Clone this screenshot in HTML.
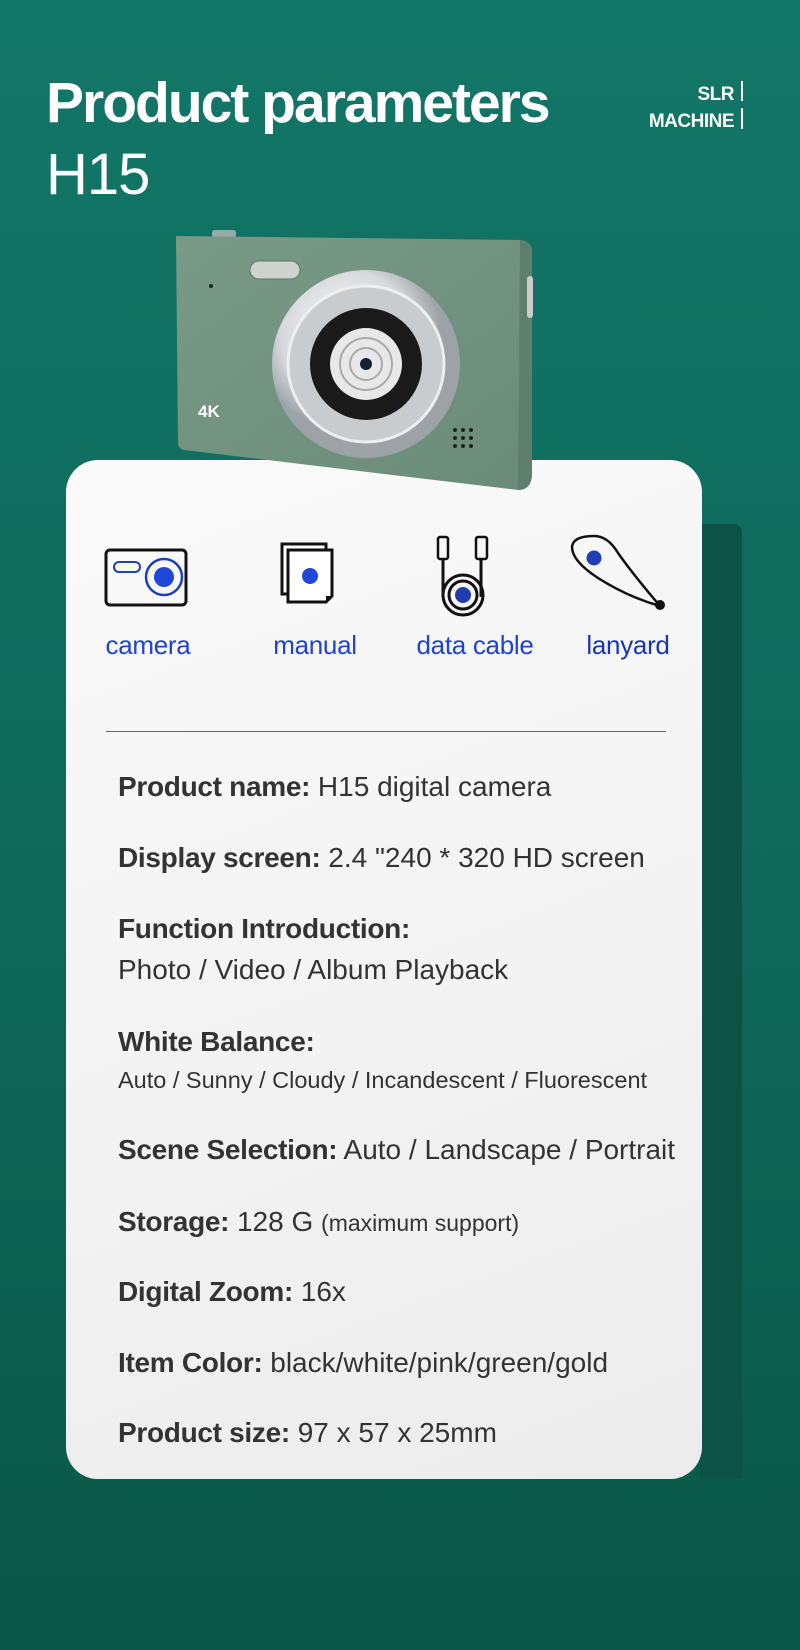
<!DOCTYPE html>
<html><head><meta charset="utf-8"><style>
*{margin:0;padding:0;box-sizing:border-box}
body{width:800px;height:1650px;overflow:hidden;position:relative;background:linear-gradient(180deg,#127667 0%,#0f6a5b 50%,#0a5747 100%);font-family:"Liberation Sans",sans-serif}
.a{position:absolute;white-space:nowrap;line-height:1}
.t{color:#fff}
.p{left:118px;font-size:28px;color:#333;letter-spacing:0}
.p b{font-weight:bold;letter-spacing:-0.3px}
.lbl{font-size:26px;color:#1f43d2;letter-spacing:-0.3px;transform:translateX(-50%)}
</style></head><body>
<div class="a t" style="left:46px;top:75px;font-size:57px;font-weight:bold;letter-spacing:-2px">Product parameters</div>
<div class="a t" style="left:46px;top:146px;font-size:58px;font-weight:normal;letter-spacing:-1px">H15</div>
<div class="a t" style="right:66px;top:81px;font-size:19px;font-weight:bold;text-align:right;line-height:27px;letter-spacing:-0.5px">SLR<br>MACHINE</div>
<div class="a" style="left:741px;top:81px;width:2px;height:20px;background:#fff"></div>
<div class="a" style="left:741px;top:108px;width:2px;height:21px;background:#fff"></div>

<div class="a" style="left:700px;top:524px;width:42px;height:955px;background:#0c5346;border-radius:0 8px 0 0"></div>
<div class="a" style="left:66px;top:460px;width:636px;height:1019px;background:linear-gradient(160deg,#fafafa,#f2f2f2 60%,#ececec);border-radius:32px"></div>

<svg class="a" style="left:170px;top:228px" width="375" height="270" viewBox="0 0 375 270">
<defs><linearGradient id="bd" x1="0" x2="1" y1="0" y2="1"><stop offset="0" stop-color="#7a9a88"/><stop offset="1" stop-color="#6a8b78"/></linearGradient>
<radialGradient id="rg" cx="0.4" cy="0.35"><stop offset="0" stop-color="#fff"/><stop offset="0.7" stop-color="#d6d9db"/><stop offset="1" stop-color="#9ca2a6"/></radialGradient></defs>
<rect x="42" y="2" width="24" height="8" rx="3" fill="#9aa"/>
<path d="M6 8 L350 12 Q362 13 362 24 L362 245 Q362 262 348 262 L14 222 Q8 221 8 214 Z" fill="url(#bd)"/>
<path d="M350 12 Q362 13 362 24 L362 245 Q362 262 348 262 Z" fill="#5f7f6e"/>
<rect x="80" y="33" width="50" height="18" rx="9" fill="#cfd3cf" stroke="#5a7a68"/>
<circle cx="41" cy="58" r="2" fill="#222"/>
<circle cx="196" cy="136" r="94" fill="url(#rg)"/>
<circle cx="196" cy="136" r="78" fill="#c9ccce" stroke="#eee" stroke-width="3"/>
<circle cx="196" cy="136" r="56" fill="#1a1a1a"/>
<circle cx="196" cy="136" r="36" fill="#e8e8e8"/>
<circle cx="196" cy="136" r="26" fill="none" stroke="#aaa" stroke-width="2"/>
<circle cx="196" cy="136" r="16" fill="none" stroke="#aaa" stroke-width="2"/>
<circle cx="196" cy="136" r="6" fill="#123"/>
<text x="28" y="189" font-size="17" font-weight="bold" fill="#fff" font-family="Liberation Sans">4K</text>
<g fill="#222"><circle cx="285" cy="202" r="2"/><circle cx="293" cy="202" r="2"/><circle cx="301" cy="202" r="2"/><circle cx="285" cy="210" r="2"/><circle cx="293" cy="210" r="2"/><circle cx="301" cy="210" r="2"/><circle cx="285" cy="218" r="2"/><circle cx="293" cy="218" r="2"/><circle cx="301" cy="218" r="2"/></g>
<rect x="357" y="48" width="6" height="42" rx="3" fill="#ccc"/>
</svg>

<svg class="a" style="left:104px;top:545px" width="86" height="66" viewBox="0 0 86 66"><rect x="2" y="5" width="80" height="55" rx="4" fill="none" stroke="#111" stroke-width="3"/><rect x="10" y="17" width="26" height="10" rx="5" fill="none" stroke="#1a3fc0" stroke-width="2"/><circle cx="60" cy="32" r="18" fill="none" stroke="#1a3fc0" stroke-width="2.5"/><circle cx="60" cy="32" r="10" fill="#1f48d8"/></svg>
<svg class="a" style="left:278px;top:540px" width="60" height="72" viewBox="0 0 60 72"><path d="M4 4 H48 V54 H4 Z" fill="#fff" stroke="#111" stroke-width="3"/><path d="M10 10 H54 V56 L48 62 H10 Z" fill="#fff" stroke="#111" stroke-width="3"/><path d="M48 62 L54 56 H48 Z" fill="#111"/><circle cx="32" cy="36" r="8" fill="#1f48d8"/></svg>
<svg class="a" style="left:434px;top:533px" width="60" height="88" viewBox="0 0 60 88"><rect x="4" y="4" width="10" height="22" rx="2" fill="none" stroke="#111" stroke-width="2.5"/><rect x="42" y="4" width="11" height="22" rx="2" fill="none" stroke="#111" stroke-width="2.5"/><path d="M9 26 V64 M47 26 V64" stroke="#111" stroke-width="3" fill="none"/><circle cx="29" cy="62" r="20" fill="none" stroke="#111" stroke-width="3"/><circle cx="29" cy="62" r="14" fill="none" stroke="#111" stroke-width="3"/><circle cx="29" cy="62" r="8" fill="#1f3fb0"/></svg>
<svg class="a" style="left:568px;top:533px" width="102" height="80" viewBox="0 0 102 80"><path d="M26 3 Q5 3 4 14 Q4 28 30 45 Q60 64 92 73 Q64 40 50 20 Q40 3 26 3 Z" fill="none" stroke="#111" stroke-width="2.5"/><circle cx="92" cy="72" r="5" fill="#111"/><circle cx="26" cy="25" r="7.5" fill="#1f3fb0"/></svg>

<div class="a lbl" style="left:148px;top:632px">camera</div>
<div class="a lbl" style="left:315px;top:632px">manual</div>
<div class="a lbl" style="left:475px;top:632px">data cable</div>
<div class="a lbl" style="left:628px;top:632px;color:#1a34b8">lanyard</div>

<div class="a" style="left:106px;top:731px;width:560px;height:1px;background:#666"></div>

<div class="a p" style="top:773px"><b>Product name:</b> H15 digital camera</div>
<div class="a p" style="top:844px"><b>Display screen:</b> 2.4 "240 * 320 HD screen</div>
<div class="a p" style="top:915px"><b>Function Introduction:</b></div>
<div class="a p" style="top:956px">Photo / Video / Album Playback</div>
<div class="a p" style="top:1028px"><b>White Balance:</b></div>
<div class="a p" style="top:1069px;font-size:23.5px;letter-spacing:0">Auto / Sunny / Cloudy / Incandescent / Fluorescent</div>
<div class="a p" style="top:1136px"><b>Scene Selection:</b> Auto / Landscape / Portrait</div>
<div class="a p" style="top:1208px"><b>Storage:</b> 128 G <span style="font-size:23px">(maximum support)</span></div>
<div class="a p" style="top:1278px"><b>Digital Zoom:</b> 16x</div>
<div class="a p" style="top:1349px"><b>Item Color:</b> black/white/pink/green/gold</div>
<div class="a p" style="top:1419px"><b>Product size:</b> 97 x 57 x 25mm</div>
</body></html>
